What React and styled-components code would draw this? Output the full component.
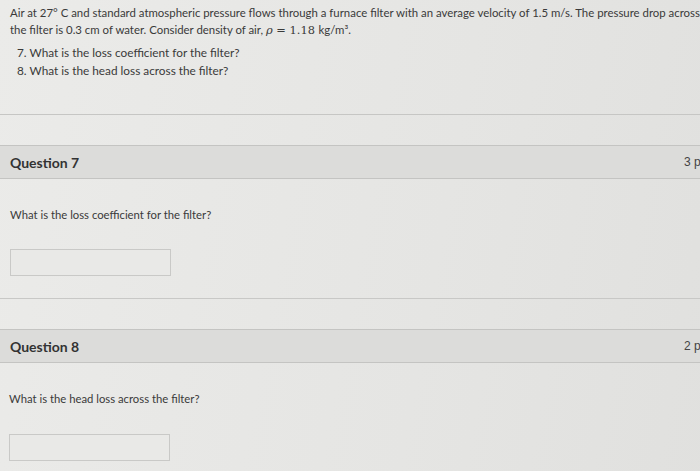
import styled, { createGlobalStyle } from 'styled-components';

const GlobalStyle = createGlobalStyle`
  html, body {
    margin: 0;
    padding: 0;
    overflow: hidden;
    background: #e7e7e5;
  }
  body {
    font-family: Lato, 'Liberation Sans', sans-serif;
    color: #3a3a3a;
  }
`;

const Page = styled.div`
  width: 720px;
  height: 471px;
  overflow: hidden;
  background: linear-gradient(100deg, #ebebe9 0%, #e5e5e3 60%, #e0e0de 100%);
`;

const Intro = styled.div`
  padding: 4px 0 0 10px;
  font-size: 11.4px;
  line-height: 17px;
  white-space: nowrap;
  height: 110px;
  border-bottom: 1px solid #c6c6c4;
`;

const Math = styled.span`
  font-family: 'DejaVu Serif', 'Liberation Serif', serif;
  font-size: 11.4px;
`;

const Unit = styled.span`
  font-family: Lato, 'Liberation Sans', sans-serif;
`;

const List = styled.ol`
  margin: 5px 0 0;
  padding: 0 0 0 7px;
  list-style: none;
  font-size: 11.8px;
  li {
    line-height: 18px;
  }
`;

const Question = styled.section`
  margin-top: 30px;
`;

const Header = styled.header`
  display: flex;
  justify-content: space-between;
  align-items: center;
  height: 32px;
  padding: 0 0 0 10px;
  background: #dcdcda;
  border-top: 1px solid #c4c4c2;
  border-bottom: 1px solid #c4c4c2;
`;

const Title = styled.h2`
  margin: 0;
  font-size: 14px;
  font-weight: 700;
  color: #333;
`;

const Points = styled.span`
  font-family: 'Liberation Sans', sans-serif;
  font-size: 12px;
  color: #444;
  width: 36px;
`;

const Body = styled.div`
  padding: 28px 0 0 ${(p) => p.$indent}px;
  height: ${(p) => p.$height}px;
  border-bottom: 1px solid #c8c8c6;
  box-sizing: border-box;
  font-size: 11.3px;
`;

const Prompt = styled.p`
  margin: 0;
  line-height: 16px;
`;

const Answer = styled.div`
  margin-top: ${(p) => p.$gap}px;
  width: 161px;
  height: 27px;
  border: 1px solid #c9c9c7;
  background: #e9e9e7;
  box-sizing: border-box;
`;

export default function App() {
  return (
    <>
      <GlobalStyle />
      <Page>
        <Intro>
          <div>
            Air at 27° C and standard atmospheric pressure flows through a furnace filter with an
            average velocity of 1.5 m/s. The pressure drop across
          </div>
          <div>
            the filter is 0.3 cm of water. Consider density of air,{' '}
            <Math>
              <i>ρ</i> = 1.18 <Unit>kg/m³</Unit>
            </Math>
            .
          </div>
          <List>
            <li>7. What is the loss coefficient for the filter?</li>
            <li>8. What is the head loss across the filter?</li>
          </List>
        </Intro>
        <Question>
          <Header>
            <Title>Question 7</Title>
            <Points>3 pts</Points>
          </Header>
          <Body $indent={10} $height={120}>
            <Prompt>What is the loss coefficient for the filter?</Prompt>
            <Answer $gap={26} />
          </Body>
        </Question>
        <Question>
          <Header>
            <Title>Question 8</Title>
            <Points>2 pts</Points>
          </Header>
          <Body $indent={9} $height={120}>
            <Prompt>What is the head loss across the filter?</Prompt>
            <Answer $gap={27} />
          </Body>
        </Question>
      </Page>
    </>
  );
}
